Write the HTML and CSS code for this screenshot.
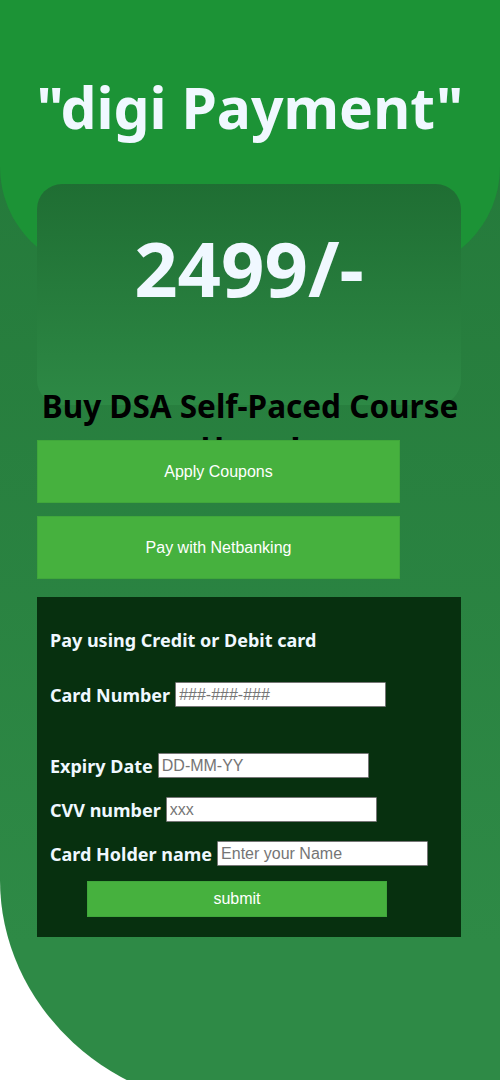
FILE: index.html
```html
<!DOCTYPE html>
<html lang="en">
<head>
<meta charset="utf-8">
<title>digi Payment</title>
<link rel="stylesheet" href="styles.css">
</head>
<body>
<div class="page">
  <header class="hero">
    <h1 class="title">"digi Payment"</h1>
  </header>
  <section class="price-card">
    <p class="price">2499/-</p>
  </section>
  <h2 class="course">Buy DSA Self-Paced Course<br>Hurry!</h2>
  <div class="actions">
    <button class="action-btn" type="button">Apply Coupons</button>
    <button class="action-btn" type="button">Pay with Netbanking</button>
  </div>
  <form class="card-form">
    <h3 class="form-title">Pay using Credit or Debit card</h3>
    <label class="field field-spaced"><span class="field-label">Card Number</span><input class="field-input" type="text" placeholder="###-###-###"></label>
    <label class="field"><span class="field-label">Expiry Date</span><input class="field-input" type="text" placeholder="DD-MM-YY"></label>
    <label class="field"><span class="field-label">CVV number</span><input class="field-input" type="text" placeholder="xxx"></label>
    <label class="field"><span class="field-label">Card Holder name</span><input class="field-input" type="text" placeholder="Enter your Name"></label>
    <button class="submit-btn" type="button">submit</button>
  </form>
</div>
</body>
</html>
```

FILE: styles.css
```css
html, body {
  margin: 0;
  padding: 0;
  background: #ffffff;
}

.page {
  height: 1110px;
  background: linear-gradient(180deg, #237739 0%, #2e8a46 85%, #2e8a46 100%);
  border-bottom-left-radius: 250px 230px;
  font-family: "Noto Sans", "Open Sans", sans-serif;
  overflow: hidden;
}

.hero {
  height: 272px;
  box-sizing: border-box;
  padding-top: 77px;
  background: #1c9336;
  border-radius: 0 0 105px 105px;
}

.title {
  margin: 0;
  text-align: center;
  font-size: 57px;
  line-height: 60px;
  font-weight: 700;
  color: #f0f8ff;
}

.price-card {
  margin: -88px 39px 0 37px;
  height: 221px;
  box-sizing: border-box;
  padding-top: 46px;
  border-radius: 25px;
  background: linear-gradient(180deg, #1f6e33 0%, #2d8945 100%);
}

.price {
  margin: 0;
  text-align: center;
  font-size: 76px;
  line-height: 76px;
  font-weight: 700;
  color: #f0f8ff;
}

.course {
  margin: -20px 0 0 0;
  height: 55px;
  text-align: center;
  font-size: 31.5px;
  line-height: 42px;
  font-weight: 700;
  color: #000000;
  white-space: nowrap;
}

.actions {
  display: flex;
  flex-direction: column;
  gap: 13px;
  padding-left: 37px;
}

.action-btn {
  width: 363px;
  height: 63px;
  border: 1px solid #40a73b;
  background: #46b13e;
  color: #ffffff;
  font-family: "Liberation Sans", Arial, sans-serif;
  font-size: 16px;
  padding: 0;
}

.card-form {
  margin: 18px 39px 0 37px;
  height: 340px;
  box-sizing: border-box;
  padding: 31px 13px 0 13px;
  background: #07300f;
  display: flex;
  flex-direction: column;
}

.form-title {
  margin: 0 0 29px 0;
  font-size: 18px;
  line-height: 25px;
  font-weight: 700;
  color: #f0f8ff;
}

.field {
  display: flex;
  align-items: center;
  gap: 5px;
  height: 25px;
  margin-bottom: 19px;
}

.field-spaced {
  margin-bottom: 46px;
}

.field-label {
  font-size: 18px;
  line-height: 22px;
  font-weight: 700;
  color: #f0f8ff;
  white-space: nowrap;
}

.field-input {
  width: 211px;
  height: 25px;
  box-sizing: border-box;
  margin: 0;
  padding: 1px 3px;
  border: 1px solid #767676;
  border-radius: 1px;
  background: #ffffff;
  font-family: "Liberation Sans", Arial, sans-serif;
  font-size: 16px;
  color: #000000;
}

.field-input::placeholder {
  color: #757575;
}

.submit-btn {
  margin: -4px 0 0 37px;
  width: 300px;
  height: 36px;
  border: 1px solid #40a73b;
  background: #46b13e;
  color: #ffffff;
  font-family: "Liberation Sans", Arial, sans-serif;
  font-size: 16px;
  padding: 0;
}
```
